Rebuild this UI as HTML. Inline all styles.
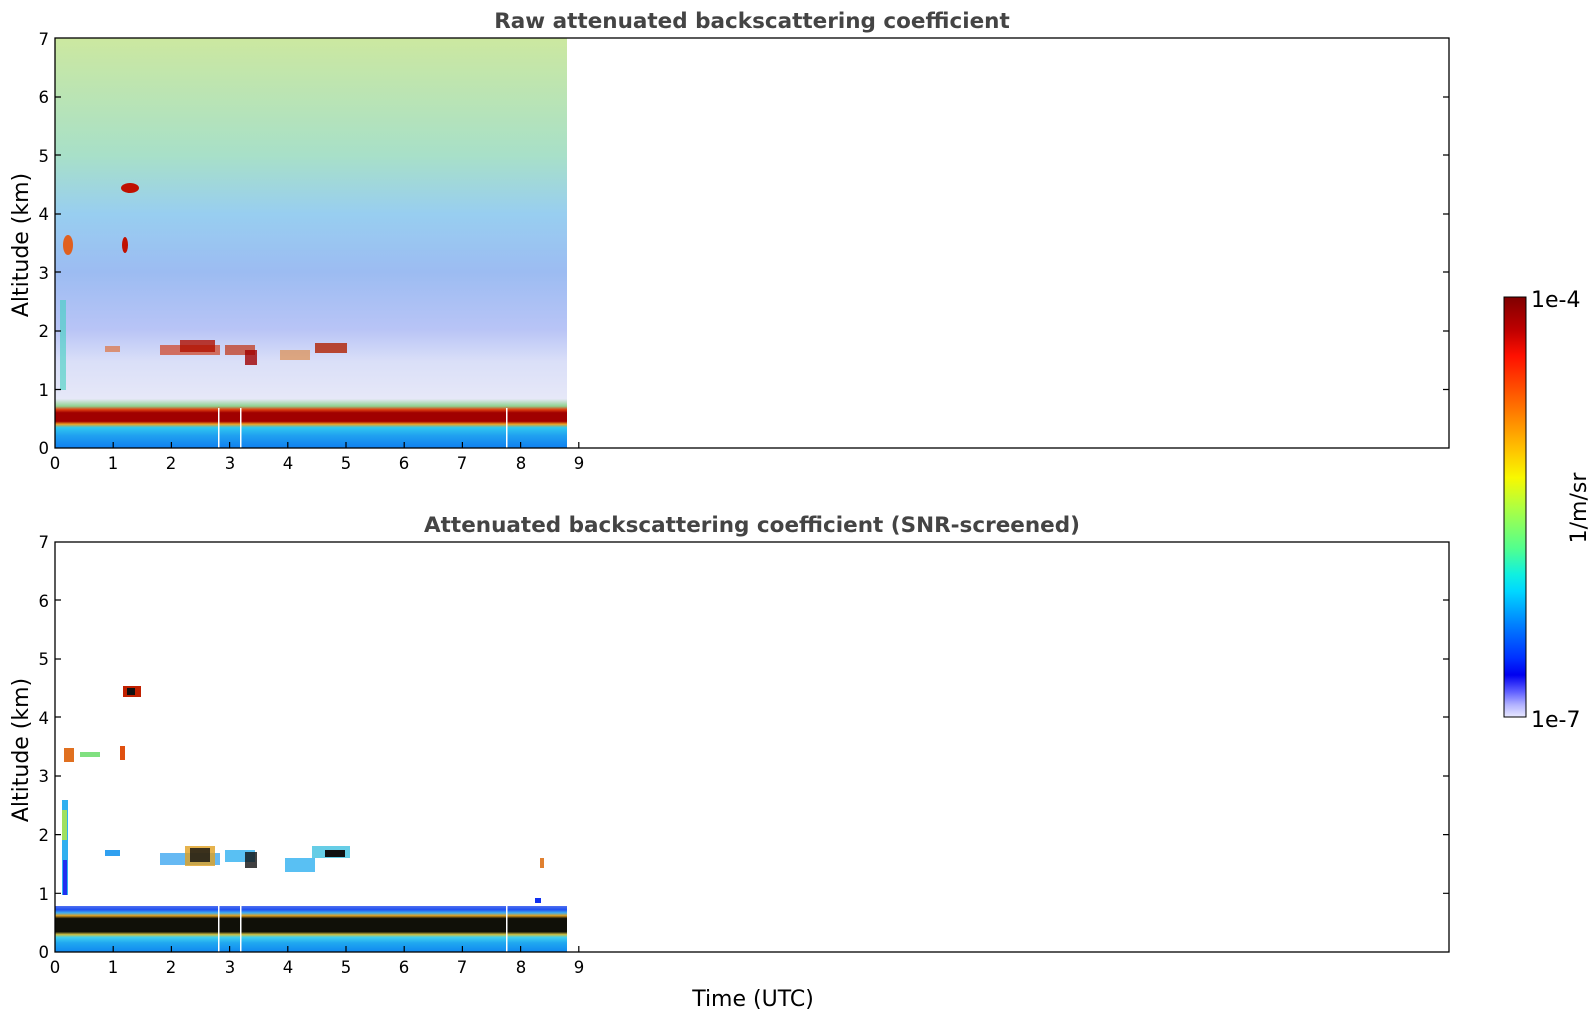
<!DOCTYPE html>
<html><head><meta charset="utf-8"><style>
html,body{margin:0;padding:0;background:#fff;}
svg{display:block;}
text{font-family:"DejaVu Sans","Liberation Sans",sans-serif;}
</style></head><body>
<svg width="1595" height="1020" viewBox="0 0 1595 1020" xmlns="http://www.w3.org/2000/svg">
<defs>
<linearGradient id="gt" x1="0" y1="0" x2="0" y2="1">
<stop offset="0" stop-color="#cce8a0"/>
<stop offset=".286" stop-color="#a8e0c8"/>
<stop offset=".43" stop-color="#98cef0"/>
<stop offset=".57" stop-color="#9cbcf2"/>
<stop offset=".71" stop-color="#b8c4f6"/>
<stop offset=".79" stop-color="#dadff8"/>
<stop offset=".88" stop-color="#e6e8f8"/>
<stop offset=".898" stop-color="#90d090"/>
<stop offset=".906" stop-color="#e04010"/>
<stop offset=".914" stop-color="#a00000"/>
<stop offset=".935" stop-color="#a00000"/>
<stop offset=".942" stop-color="#f0a020"/>
<stop offset=".95" stop-color="#30c8f0"/>
<stop offset=".97" stop-color="#20a0f0"/>
<stop offset="1" stop-color="#1080f0"/>
</linearGradient>
<linearGradient id="gb" x1="0" y1="0" x2="0" y2="1">
<stop offset="0" stop-color="#5070f0"/>
<stop offset=".08" stop-color="#2050f0"/>
<stop offset=".15" stop-color="#40b0f0"/>
<stop offset=".21" stop-color="#e0a020"/>
<stop offset=".27" stop-color="#101008"/>
<stop offset=".56" stop-color="#101008"/>
<stop offset=".62" stop-color="#d0c040"/>
<stop offset=".68" stop-color="#40d0f0"/>
<stop offset=".8" stop-color="#20a8f0"/>
<stop offset="1" stop-color="#1088f0"/>
</linearGradient>
<linearGradient id="cb" x1="0" y1="0" x2="0" y2="1">
<stop offset="0" stop-color="#800000"/>
<stop offset=".08" stop-color="#c00000"/>
<stop offset=".14" stop-color="#ff1000"/>
<stop offset=".26" stop-color="#ff7000"/>
<stop offset=".36" stop-color="#ffc000"/>
<stop offset=".43" stop-color="#f8f800"/>
<stop offset=".5" stop-color="#b0ff40"/>
<stop offset=".6" stop-color="#50ff90"/>
<stop offset=".66" stop-color="#10f0e0"/>
<stop offset=".7" stop-color="#00d8ff"/>
<stop offset=".78" stop-color="#0080ff"/>
<stop offset=".86" stop-color="#0030ff"/>
<stop offset=".9" stop-color="#0000f0"/>
<stop offset=".94" stop-color="#6060ff"/>
<stop offset=".97" stop-color="#b0b0ff"/>
<stop offset="1" stop-color="#e8e8ff"/>
</linearGradient>
</defs>

<!-- titles -->
<text x="752" y="28" font-size="21.5" font-weight="bold" fill="#444" text-anchor="middle">Raw attenuated backscattering coefficient</text>
<text x="752" y="532" font-size="21.5" font-weight="bold" fill="#444" text-anchor="middle">Attenuated backscattering coefficient (SNR-screened)</text>

<!-- TOP data -->
<rect x="55" y="38" width="512" height="410" fill="url(#gt)"/>
<g fill="#c01000">
<ellipse cx="130" cy="188" rx="9" ry="5"/>
<ellipse cx="68" cy="245" rx="5" ry="10" fill="#e06020"/>
<ellipse cx="125" cy="245" rx="3" ry="8"/>
<rect x="160" y="345" width="60" height="10" fill="#d04020" opacity=".7"/>
<rect x="180" y="340" width="35" height="12" fill="#b01000" opacity=".8"/>
<rect x="225" y="345" width="30" height="10" fill="#c03010" opacity=".7"/>
<rect x="245" y="350" width="12" height="15" fill="#a00000" opacity=".8"/>
<rect x="280" y="350" width="30" height="10" fill="#e08030" opacity=".6"/>
<rect x="315" y="343" width="32" height="10" fill="#b02000" opacity=".8"/>
<rect x="105" y="346" width="15" height="6" fill="#e06020" opacity=".6"/>
<rect x="60" y="300" width="6" height="90" fill="#40d0c0" opacity=".6"/>
</g>
<g fill="#fff"><rect x="218" y="408" width="1.5" height="40"/><rect x="240" y="408" width="1.5" height="40"/><rect x="506" y="408" width="1.5" height="40"/></g>

<!-- BOTTOM data -->
<rect x="55" y="906" width="512" height="46" fill="url(#gb)"/>
<g>
<rect x="62" y="800" width="6" height="95" fill="#30b0f0"/>
<rect x="63" y="860" width="4" height="35" fill="#2030f0"/>
<rect x="62" y="810" width="5" height="30" fill="#a0e060"/>
<rect x="123" y="686" width="18" height="11" fill="#c02000"/>
<rect x="127" y="688" width="8" height="7" fill="#101010"/>
<rect x="64" y="748" width="10" height="14" fill="#e07020"/>
<rect x="120" y="746" width="5" height="14" fill="#e05010"/>
<rect x="80" y="752" width="20" height="5" fill="#80e080"/>
<rect x="105" y="850" width="15" height="6" fill="#30a0f0"/>
<rect x="160" y="853" width="60" height="12" fill="#40a8f0" opacity=".8"/>
<rect x="185" y="846" width="30" height="20" fill="#e0a020" opacity=".8"/>
<rect x="190" y="848" width="20" height="14" fill="#101010" opacity=".8"/>
<rect x="225" y="850" width="30" height="12" fill="#30b0f0" opacity=".8"/>
<rect x="245" y="852" width="12" height="16" fill="#101010" opacity=".8"/>
<rect x="285" y="858" width="30" height="14" fill="#30b0f0" opacity=".8"/>
<rect x="312" y="846" width="38" height="12" fill="#40c0e0" opacity=".8"/>
<rect x="325" y="850" width="20" height="7" fill="#101010"/>
<rect x="535" y="898" width="6" height="5" fill="#1030f0"/>
<rect x="540" y="858" width="4" height="10" fill="#e08030"/>
</g>
<g fill="#fff"><rect x="218" y="906" width="1.5" height="46"/><rect x="240" y="906" width="1.5" height="46"/><rect x="506" y="906" width="1.5" height="46"/></g>

<!-- axes frames -->
<rect x="55" y="38" width="1394" height="410" fill="none" stroke="#000" stroke-width="1.3"/>
<rect x="55" y="542" width="1394" height="410" fill="none" stroke="#000" stroke-width="1.3"/>

<g stroke="#000" stroke-width="1.2">
<path d="M55 389.5h6M55 331h6M55 272h6M55 214h6M55 155h6M55 97h6M1449 389.5h-6M1449 331h-6M1449 272h-6M1449 214h-6M1449 155h-6M1449 97h-6"/>
<path d="M55 893.3h6M55 834.6h6M55 776h6M55 717h6M55 659h6M55 600h6M1449 893.3h-6M1449 834.6h-6M1449 776h-6M1449 717h-6M1449 659h-6M1449 600h-6"/>
<path d="M113.2 448v-6M171.4 448v-6M229.6 448v-6M287.8 448v-6M346 448v-6M404.2 448v-6M462.4 448v-6M520.6 448v-6M578.8 448v-6"/>
<path d="M113.2 952v-6M171.4 952v-6M229.6 952v-6M287.8 952v-6M346 952v-6M404.2 952v-6M462.4 952v-6M520.6 952v-6M578.8 952v-6"/>
</g>

<g font-size="16.5" fill="#000" text-anchor="end">
<text x="49" y="454">0</text><text x="49" y="396">1</text><text x="49" y="337">2</text><text x="49" y="279">3</text><text x="49" y="220">4</text><text x="49" y="162">5</text><text x="49" y="103">6</text><text x="49" y="45">7</text>
<text x="49" y="958">0</text><text x="49" y="900">1</text><text x="49" y="841">2</text><text x="49" y="782">3</text><text x="49" y="724">4</text><text x="49" y="665">5</text><text x="49" y="607">6</text><text x="49" y="548">7</text>
</g>
<g font-size="16.5" fill="#000" text-anchor="middle">
<text x="55" y="469">0</text><text x="113" y="469">1</text><text x="171" y="469">2</text><text x="230" y="469">3</text><text x="288" y="469">4</text><text x="346" y="469">5</text><text x="404" y="469">6</text><text x="462" y="469">7</text><text x="521" y="469">8</text><text x="579" y="469">9</text>
<text x="55" y="973">0</text><text x="113" y="973">1</text><text x="171" y="973">2</text><text x="230" y="973">3</text><text x="288" y="973">4</text><text x="346" y="973">5</text><text x="404" y="973">6</text><text x="462" y="973">7</text><text x="521" y="973">8</text><text x="579" y="973">9</text>
</g>
<text x="753" y="1006" font-size="22" text-anchor="middle">Time (UTC)</text>
<text transform="translate(28,245) rotate(-90)" font-size="22" text-anchor="middle">Altitude (km)</text>
<text transform="translate(28,750) rotate(-90)" font-size="22" text-anchor="middle">Altitude (km)</text>

<!-- colorbar -->
<rect x="1504" y="297" width="22" height="420" fill="url(#cb)" stroke="#000" stroke-width="1"/>
<text x="1531" y="307" font-size="22">1e-4</text>
<text x="1531" y="727" font-size="22">1e-7</text>
<text transform="translate(1586,508) rotate(-90)" font-size="22" text-anchor="middle">1/m/sr</text>
</svg>
</body></html>
